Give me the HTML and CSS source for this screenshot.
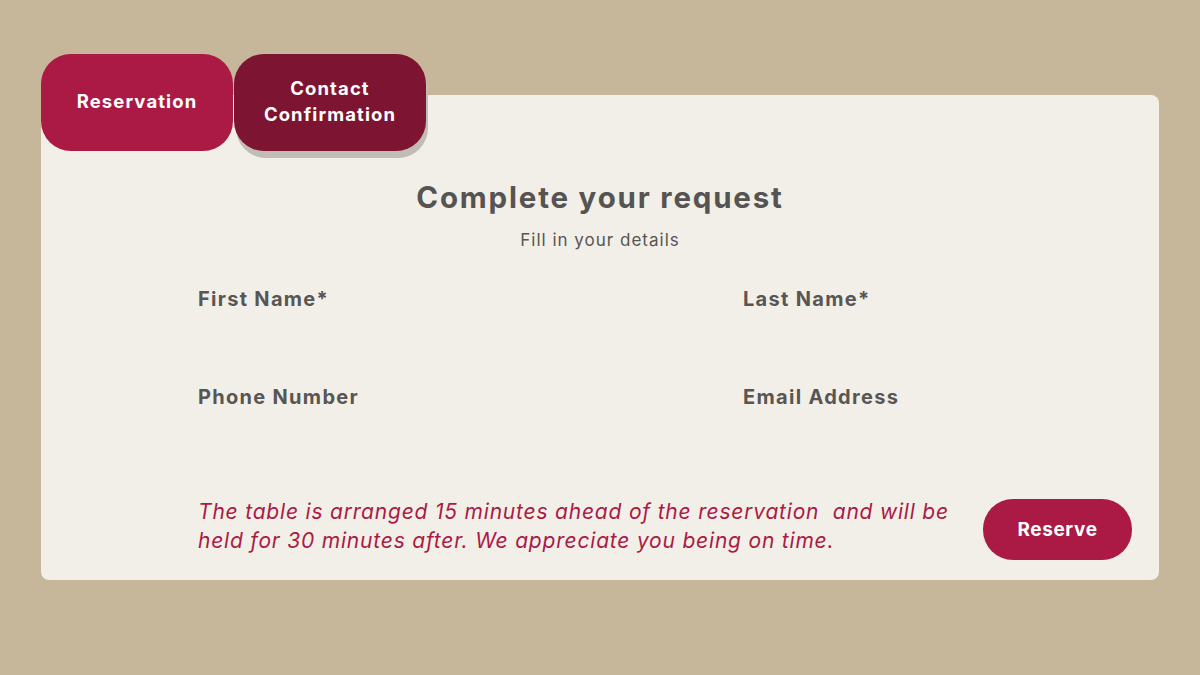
FILE: index.html
```html
<!DOCTYPE html>
<html>
<head>
<meta charset="utf-8">
<link rel="stylesheet" href="styles.css">
</head>
<body>
<div class="page">
  <div class="tabs">
    <div class="tab tab-active">Reservation</div>
    <div class="tab tab-dark">Contact<br>Confirmation</div>
  </div>
  <div class="card">
    <h1 class="title">Complete your request</h1>
    <p class="subtitle">Fill in your details</p>
    <div class="fields">
      <div class="field">First Name*</div>
      <div class="field">Last Name*</div>
      <div class="field">Phone Number</div>
      <div class="field">Email Address</div>
    </div>
    <div class="footer">
      <p class="note">The table is arranged 15 minutes ahead of the reservation&nbsp; and will be held for 30 minutes after. We appreciate you being on time.</p>
      <div class="btn">Reserve</div>
    </div>
  </div>
</div>
</body>
</html>
```
FILE: styles.css
```css
html, body {
  margin: 0;
  padding: 0;
}
body {
  background: #c6b79a;
  font-family: Inter, "Noto Sans", sans-serif;
  width: 1200px;
  height: 675px;
  overflow: hidden;
}
.page {
  padding: 54px 41px 0 41px;
}
.tabs {
  display: flex;
  gap: 1px;
  position: relative;
  z-index: 2;
  height: 97px;
}
.tab {
  width: 192px;
  height: 97px;
  box-sizing: border-box;
  padding-bottom: 4px;
  border-radius: 30px;
  display: flex;
  align-items: center;
  justify-content: center;
  text-align: center;
  color: #fff;
  font-weight: 700;
  font-size: 18.5px;
  line-height: 26px;
  letter-spacing: 1.1px;
}
.tab-active {
  background: #aa1a45;
}
.tab-dark {
  background: #7d1431;
  box-shadow: 2px 7px 0 #c1bcb5;
}
.card {
  margin-top: -56px;
  width: 1118px;
  height: 485px;
  box-sizing: border-box;
  background: #f2efe8;
  border-radius: 8px;
  padding: 82px 27px 20px 157px;
  position: relative;
  z-index: 1;
  display: flex;
  flex-direction: column;
}
.title {
  margin: 0 0 0 -157px;
  width: 1118px;
  text-align: center;
  font-size: 29.5px;
  line-height: 40px;
  font-weight: 700;
  color: #555452;
  letter-spacing: 1.8px;
}
.subtitle {
  margin: 11px 0 0 -157px;
  width: 1118px;
  text-align: center;
  font-size: 17px;
  line-height: 24px;
  color: #575654;
  letter-spacing: 1px;
}
.fields {
  display: grid;
  grid-template-columns: 545px 1fr;
  row-gap: 72px;
  margin-top: 34px;
}
.field {
  font-size: 20px;
  font-weight: 700;
  color: #575654;
  line-height: 26px;
  letter-spacing: 1.3px;
}
.footer {
  margin-top: auto;
  display: flex;
  align-items: flex-end;
  justify-content: space-between;
}
.note {
  margin: 0 0 5px 0;
  width: 770px;
  font-style: italic;
  font-size: 21px;
  line-height: 29px;
  color: #aa1a45;
  letter-spacing: 0.8px;
}
.btn {
  width: 149px;
  height: 61px;
  border-radius: 30px;
  background: #aa1a45;
  color: #fff;
  font-weight: 700;
  font-size: 19px;
  letter-spacing: 0.6px;
  display: flex;
  align-items: center;
  justify-content: center;
}
```
